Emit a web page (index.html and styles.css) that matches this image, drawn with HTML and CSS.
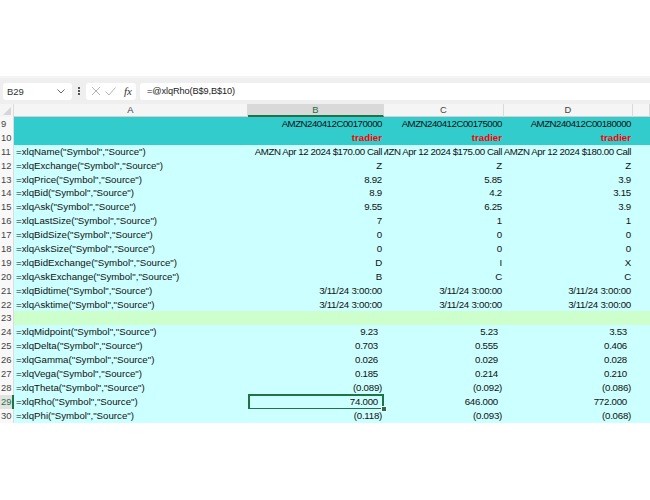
FILE: index.html
```html
<!DOCTYPE html>
<html>
<head>
<meta charset="utf-8">
<link rel="stylesheet" href="styles.css">
</head>
<body>
<div class="topspace"></div>
<div class="fbar">
  <div class="namebox"><span>B29</span>
    <svg class="chev" width="8" height="5" viewBox="0 0 8 5"><path d="M0.5 0.5 L4 4 L7.5 0.5" fill="none" stroke="#666" stroke-width="1"/></svg>
  </div>
  <div class="dots"><i></i><i></i><i></i></div>
  <div class="fnbox">
    <svg width="10" height="10" viewBox="0 0 10 10"><path d="M1 1 L9 9 M9 1 L1 9" stroke="#b5b5b5" stroke-width="1" fill="none"/></svg>
    <svg width="11" height="9" viewBox="0 0 11 9"><path d="M0.5 4.5 L4 8 L10.5 0.5" stroke="#b5b5b5" stroke-width="1" fill="none"/></svg>
    <span class="fx">fx</span>
  </div>
  <div class="formula">=@xlqRho(B$9,B$10)</div>
</div>
<div class="sheet">
  <div class="row hdr">
    <div class="rn corner"><svg width="8" height="8" viewBox="0 0 8 8"><path d="M8 0 L8 8 L0 8 Z" fill="#d6d6d6"/></svg></div>
    <div class="ch">A</div><div class="ch sel">B</div><div class="ch">C</div><div class="ch">D</div><div class="ch"></div>
  </div>
  <div class="row teal sym"><div class="rn">9</div><div class="c a"></div><div class="c r"><span>AMZN240412C00170000</span></div><div class="c r"><span>AMZN240412C00175000</span></div><div class="c r"><span>AMZN240412C00180000</span></div><div class="c"></div></div>
  <div class="row teal"><div class="rn">10</div><div class="c a"></div><div class="c r red"><span>tradier</span></div><div class="c r red"><span>tradier</span></div><div class="c r red"><span>tradier</span></div><div class="c"></div></div>
  <div class="row cyan names"><div class="rn">11</div><div class="c a">=xlqName("Symbol","Source")</div><div class="c r"><span>AMZN Apr 12 2024 $170.00 Call</span></div><div class="c r"><span>AMZN Apr 12 2024 $175.00 Call</span></div><div class="c r"><span>AMZN Apr 12 2024 $180.00 Call</span></div><div class="c"></div></div>
  <div class="row cyan"><div class="rn">12</div><div class="c a">=xlqExchange("Symbol","Source")</div><div class="c r"><span>Z</span></div><div class="c r"><span>Z</span></div><div class="c r"><span>Z</span></div><div class="c"></div></div>
  <div class="row cyan"><div class="rn">13</div><div class="c a">=xlqPrice("Symbol","Source")</div><div class="c r"><span>8.92</span></div><div class="c r"><span>5.85</span></div><div class="c r"><span>3.9</span></div><div class="c"></div></div>
  <div class="row cyan"><div class="rn">14</div><div class="c a">=xlqBid("Symbol","Source")</div><div class="c r"><span>8.9</span></div><div class="c r"><span>4.2</span></div><div class="c r"><span>3.15</span></div><div class="c"></div></div>
  <div class="row cyan"><div class="rn">15</div><div class="c a">=xlqAsk("Symbol","Source")</div><div class="c r"><span>9.55</span></div><div class="c r"><span>6.25</span></div><div class="c r"><span>3.9</span></div><div class="c"></div></div>
  <div class="row cyan"><div class="rn">16</div><div class="c a">=xlqLastSize("Symbol","Source")</div><div class="c r"><span>7</span></div><div class="c r"><span>1</span></div><div class="c r"><span>1</span></div><div class="c"></div></div>
  <div class="row cyan"><div class="rn">17</div><div class="c a">=xlqBidSize("Symbol","Source")</div><div class="c r"><span>0</span></div><div class="c r"><span>0</span></div><div class="c r"><span>0</span></div><div class="c"></div></div>
  <div class="row cyan"><div class="rn">18</div><div class="c a">=xlqAskSize("Symbol","Source")</div><div class="c r"><span>0</span></div><div class="c r"><span>0</span></div><div class="c r"><span>0</span></div><div class="c"></div></div>
  <div class="row cyan"><div class="rn">19</div><div class="c a">=xlqBidExchange("Symbol","Source")</div><div class="c r"><span>D</span></div><div class="c r"><span>I</span></div><div class="c r"><span>X</span></div><div class="c"></div></div>
  <div class="row cyan"><div class="rn">20</div><div class="c a">=xlqAskExchange("Symbol","Source")</div><div class="c r"><span>B</span></div><div class="c r"><span>C</span></div><div class="c r"><span>C</span></div><div class="c"></div></div>
  <div class="row cyan"><div class="rn">21</div><div class="c a">=xlqBidtime("Symbol","Source")</div><div class="c r"><span>3/11/24 3:00:00</span></div><div class="c r"><span>3/11/24 3:00:00</span></div><div class="c r"><span>3/11/24 3:00:00</span></div><div class="c"></div></div>
  <div class="row cyan"><div class="rn">22</div><div class="c a">=xlqAsktime("Symbol","Source")</div><div class="c r"><span>3/11/24 3:00:00</span></div><div class="c r"><span>3/11/24 3:00:00</span></div><div class="c r"><span>3/11/24 3:00:00</span></div><div class="c"></div></div>
  <div class="row green"><div class="rn">23</div><div class="c a"></div><div class="c"></div><div class="c"></div><div class="c"></div><div class="c"></div></div>
  <div class="row cyan"><div class="rn">24</div><div class="c a">=xlqMidpoint("Symbol","Source")</div><div class="c r p"><span>9.23</span></div><div class="c r p"><span>5.23</span></div><div class="c r p"><span>3.53</span></div><div class="c"></div></div>
  <div class="row cyan"><div class="rn">25</div><div class="c a">=xlqDelta("Symbol","Source")</div><div class="c r p"><span>0.703</span></div><div class="c r p"><span>0.555</span></div><div class="c r p"><span>0.406</span></div><div class="c"></div></div>
  <div class="row cyan"><div class="rn">26</div><div class="c a">=xlqGamma("Symbol","Source")</div><div class="c r p"><span>0.026</span></div><div class="c r p"><span>0.029</span></div><div class="c r p"><span>0.028</span></div><div class="c"></div></div>
  <div class="row cyan"><div class="rn">27</div><div class="c a">=xlqVega("Symbol","Source")</div><div class="c r p"><span>0.185</span></div><div class="c r p"><span>0.214</span></div><div class="c r p"><span>0.210</span></div><div class="c"></div></div>
  <div class="row cyan"><div class="rn">28</div><div class="c a">=xlqTheta("Symbol","Source")</div><div class="c r"><span>(0.089)</span></div><div class="c r"><span>(0.092)</span></div><div class="c r"><span>(0.086)</span></div><div class="c"></div></div>
  <div class="row cyan"><div class="rn selrow">29</div><div class="c a">=xlqRho("Symbol","Source")</div><div class="c r p active"><span>74.000</span></div><div class="c r p"><span>646.000</span></div><div class="c r p"><span>772.000</span></div><div class="c"></div></div>
  <div class="row cyan"><div class="rn">30</div><div class="c a">=xlqPhi("Symbol","Source")</div><div class="c r"><span>(0.118)</span></div><div class="c r"><span>(0.093)</span></div><div class="c r"><span>(0.068)</span></div><div class="c"></div></div>
</div>
</body>
</html>
```
FILE: styles.css
```css
html, body {
  margin: 0;
  padding: 0;
  background: #ffffff;
}
body {
  font-family: "Liberation Sans", Arial, sans-serif;
  color: #111;
}
.topspace {
  height: 76px;
  border-bottom: 2px solid #f4f4f4;
}
.fbar {
  height: 26px;
  background: #efefef;
  display: flex;
  align-items: center;
  padding-left: 3px;
}
.namebox {
  width: 69px;
  height: 17px;
  background: #fff;
  border-radius: 3px;
  display: flex;
  align-items: center;
  justify-content: space-between;
  padding: 0 5px 0 4px;
  box-sizing: border-box;
  font-size: 9.5px;
  color: #333;
}
.chev { margin-right: 2px; }
.dots {
  width: 14px;
  display: flex;
  flex-direction: column;
  align-items: center;
  gap: 1.5px;
}
.dots i {
  display: block;
  width: 1.5px;
  height: 1.5px;
  background: #555;
}
.fnbox {
  width: 50px;
  height: 17px;
  background: #fff;
  border-radius: 3px;
  display: flex;
  align-items: center;
  gap: 4px;
  padding-left: 5px;
  box-sizing: border-box;
}
.fx {
  font-family: "Liberation Serif", serif;
  font-style: italic;
  font-size: 11px;
  color: #333;
  margin-left: 4px;
}
.formula {
  flex: 1;
  height: 17px;
  margin-left: 4px;
  background: #fff;
  border-radius: 3px 0 0 3px;
  font-size: 9.2px;
  letter-spacing: -0.1px;
  line-height: 17px;
  padding-left: 7px;
  color: #222;
}
.row {
  display: grid;
  grid-template-columns: 14px 234px 136px 120px 129px 1fr;
  height: 13.9px;
  font-size: 9.7px;
  line-height: 13.9px;
}
.row.hdr {
  height: 12px;
  line-height: 12px;
  background: #f5f5f5;
  border-bottom: 1px solid #d0d0d0;
}
.ch {
  text-align: center;
  color: #444;
  border-right: 1px solid #dadada;
  font-size: 9.4px;
}
.ch.sel {
  background: #d9d9d9;
  color: #1e6e42;
  border-bottom: 2px solid #217346;
  line-height: 11px;
}
.rn {
  background: #f8f8f8;
  color: #444;
  font-size: 9.4px;
  padding-left: 1px;
  border-right: 1px solid #dcdcdc;
  overflow: hidden;
  white-space: nowrap;
}
.rn.corner {
  display: flex;
  align-items: flex-end;
  justify-content: flex-end;
  padding: 0 2px 2px 0;
  background: #f5f5f5;
}
.rn.selrow {
  color: #217346;
  background: #e2e2e2;
  border-right: 2px solid #217346;
}
.c {
  white-space: nowrap;
  overflow: hidden;
  position: relative;
}
.c.a {
  padding-left: 2px;
}
.c.r {
  display: flex;
  justify-content: flex-end;
  padding-right: 2px;
  letter-spacing: -0.25px;
}
.sym .c.r { letter-spacing: -0.5px; }
.names .c.r { letter-spacing: -0.42px; }
.c.r span { flex-shrink: 0; }
.c.r.p { padding-right: 6px; }
.c.red {
  color: #ff0000;
  font-weight: bold;
  letter-spacing: 0;
}
.teal .c { background: #33cccc; }
.cyan .c { background: #ccffff; }
.green .c { background: #ccffcc; }
.c.active {
  overflow: visible;
}
.c.active::after {
  content: "";
  position: absolute;
  left: 0;
  top: -1px;
  right: 0;
  bottom: -1px;
  border: 2px solid #217346;
  pointer-events: none;
}
.c.active::before {
  content: "";
  position: absolute;
  right: -3px;
  bottom: -3px;
  width: 4px;
  height: 4px;
  background: #217346;
  border: 1px solid #fff;
  z-index: 2;
}
```
